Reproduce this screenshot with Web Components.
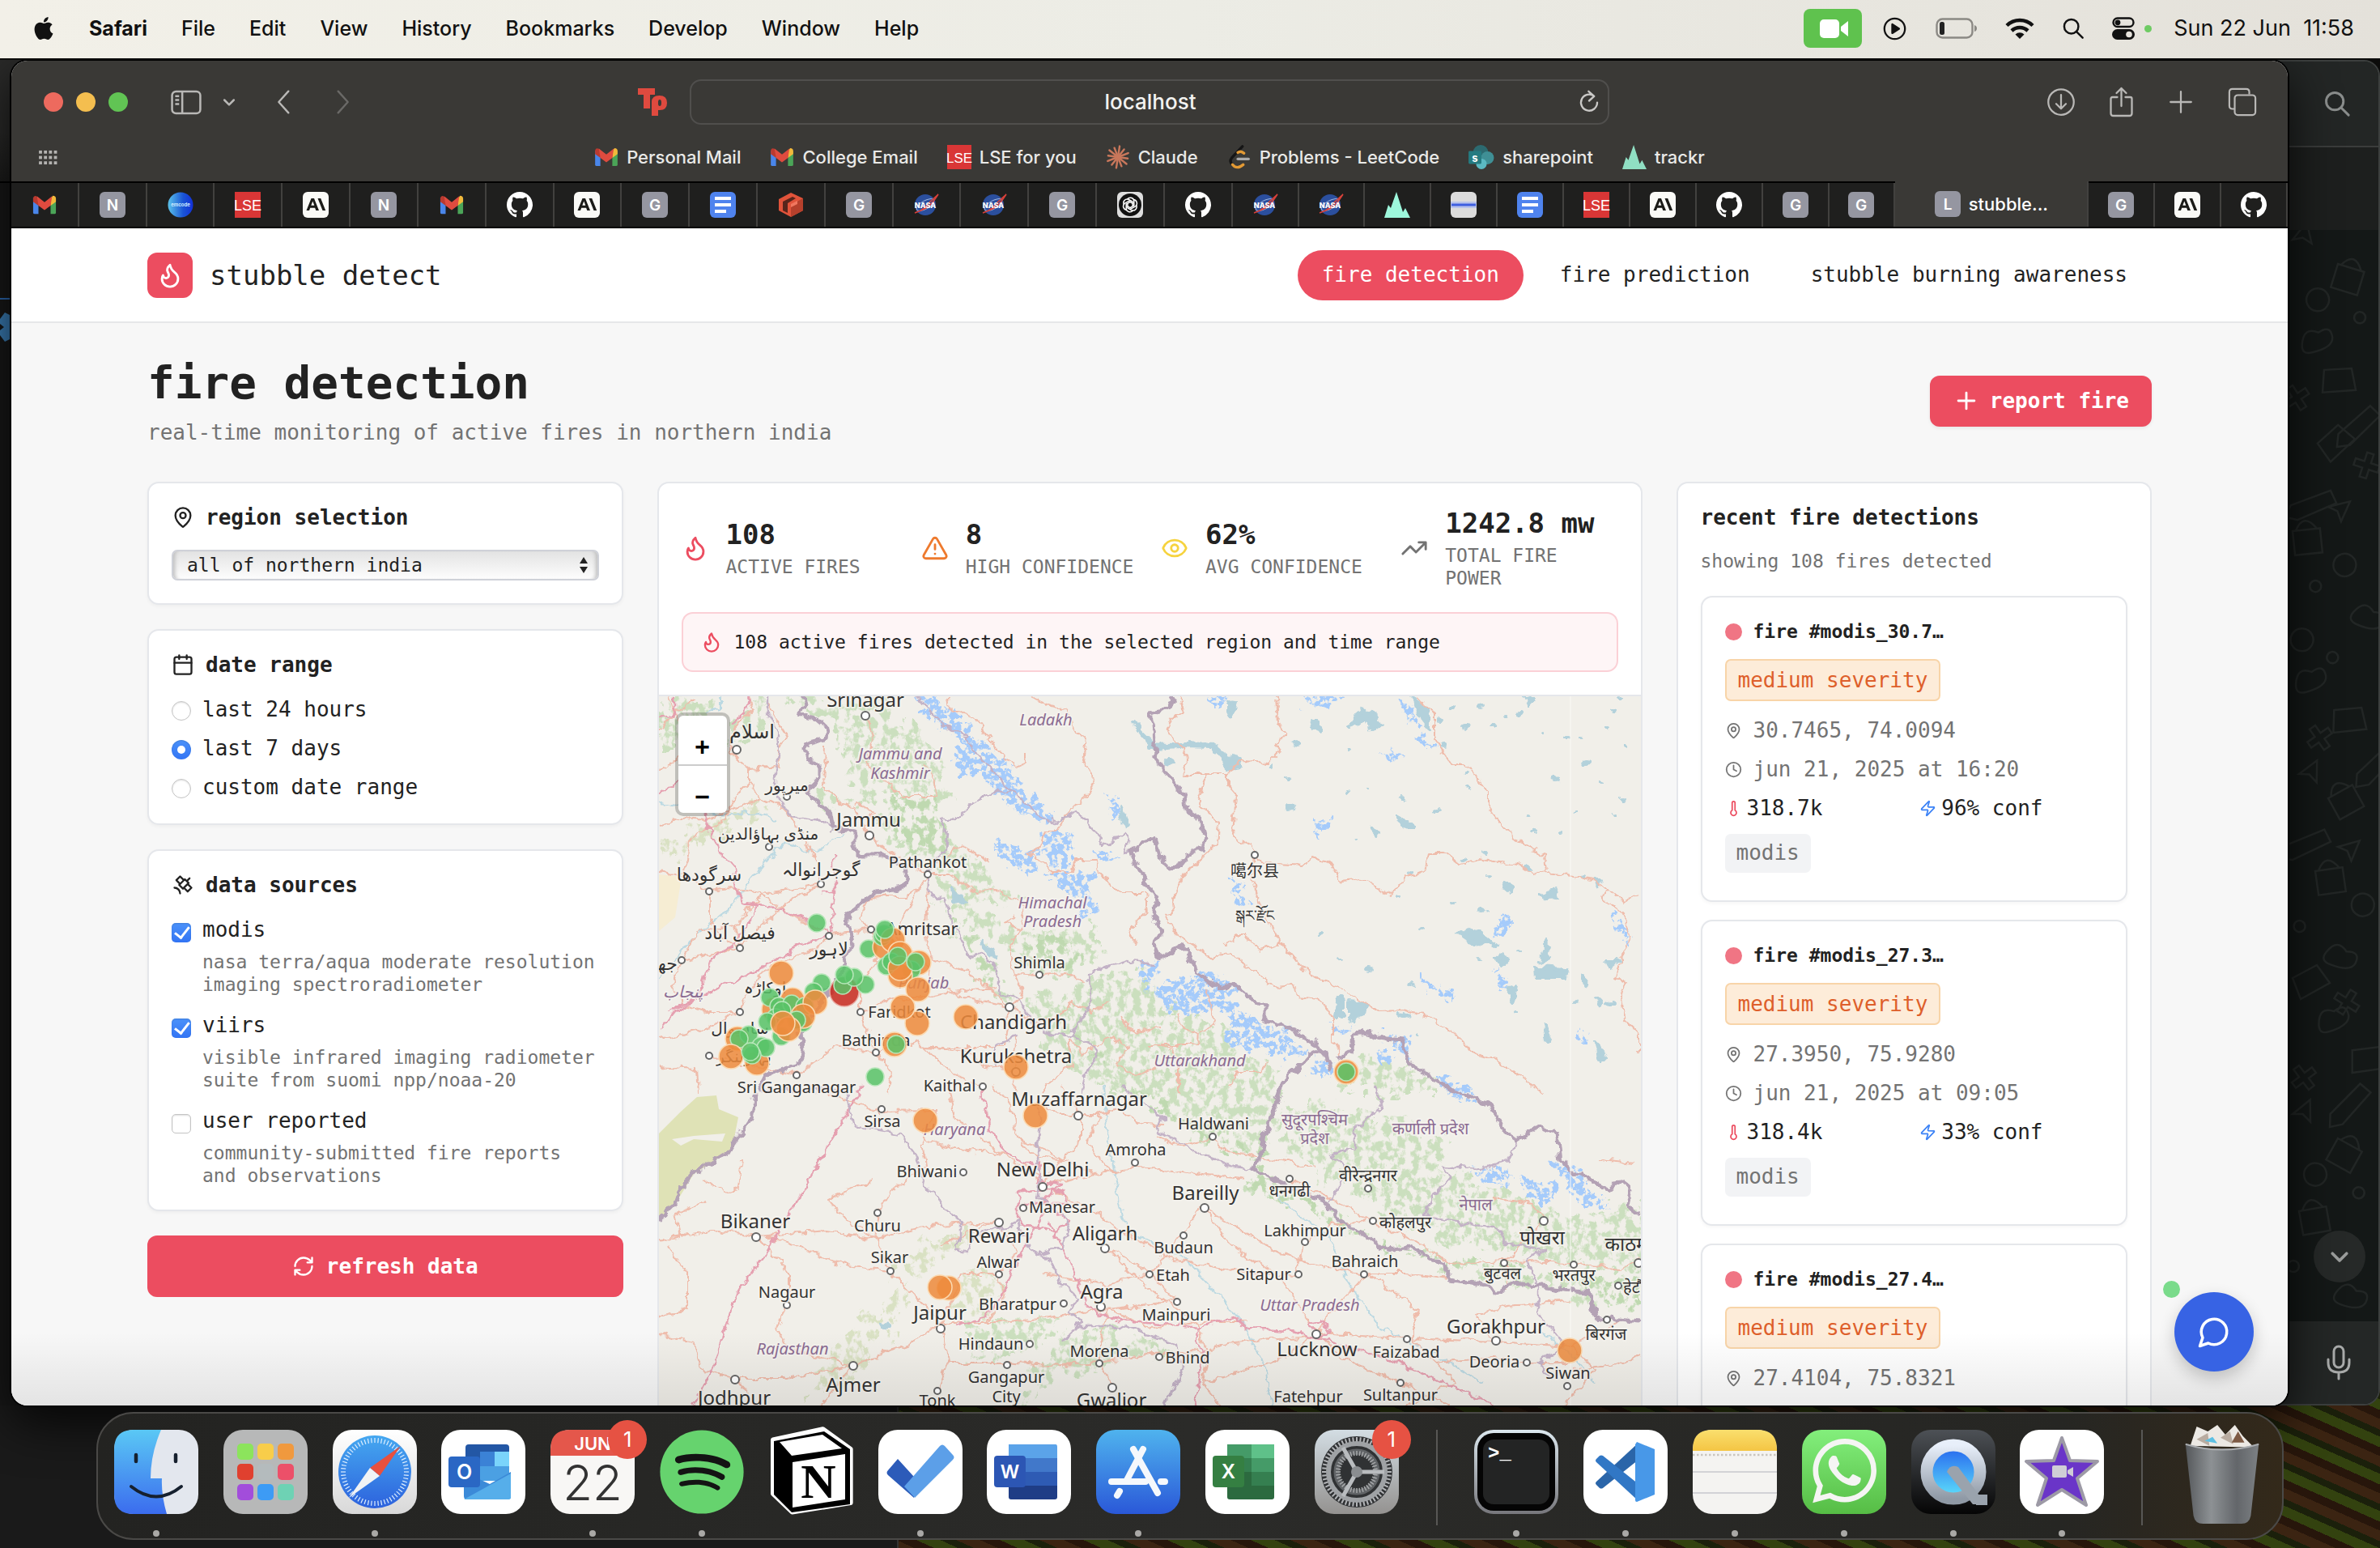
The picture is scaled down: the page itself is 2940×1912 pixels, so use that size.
<!DOCTYPE html>
<html lang="en">
<head>
<meta charset="utf-8">
<title>stubble detect</title>
<style>
html,body{margin:0;height:100%;overflow:hidden;background:#111}
</style>
</head>
<body>
<mac-desktop></mac-desktop>
<script>
const MONO='"DejaVu Sans Mono","Liberation Mono",monospace';
const UI='Inter,"Liberation Sans",sans-serif';
const BASE='*{box-sizing:border-box}button{font:inherit;color:inherit;background:none;border:0;padding:0;margin:0}a{color:inherit;text-decoration:none}svg{display:block}h1,h2,h3,p{margin:0}';
const define=(tag,css,html)=>customElements.define(tag,class extends HTMLElement{
  connectedCallback(){
    if(this.shadowRoot)return;
    const root=this.attachShadow({mode:'open'});
    root.innerHTML='<style>'+BASE+css+'</style>'+(typeof html==='function'?html(this):html);
  }
});

/* ---------- icons ---------- */
const line=(d,w=2)=>`<svg viewBox="0 0 24 24" fill="none" stroke="currentColor" stroke-width="${w}" stroke-linecap="round" stroke-linejoin="round">${d}</svg>`;
const tile=(bg,body)=>`<svg viewBox="0 0 32 32"><rect width="32" height="32" rx="6" fill="${bg}"/>${body}</svg>`;
const letter=(l)=>tile('#9596a1',`<text x="16" y="23" text-anchor="middle" font-family="Inter,sans-serif" font-weight="600" font-size="19" fill="#fff">${l}</text>`);
const app=(bg,body,defs='')=>`<svg viewBox="0 0 104 104"><defs>${defs}</defs><rect width="104" height="104" rx="24" fill="${bg}"/>${body}</svg>`;
const grad=(id,...c)=>`<linearGradient id="${id}" x1="0" y1="0" x2="0" y2="1">${c.map((k,i)=>`<stop offset="${i/(c.length-1)}" stop-color="${k}"/>`).join('')}</linearGradient>`;
const ticks=(n,cx,cy,r1,r2,col,w)=>Array.from({length:n},(_,i)=>{const a=i/n*Math.PI*2,c=Math.cos(a),s=Math.sin(a);return `<path d="M${(cx+c*r1).toFixed(1)} ${(cy+s*r1).toFixed(1)}L${(cx+c*r2).toFixed(1)} ${(cy+s*r2).toFixed(1)}" stroke="${col}" stroke-width="${w}"/>`}).join('');
const ICONS={
flame:line('<path d="M8.5 14.5A2.5 2.5 0 0 0 11 12c0-1.38-.5-2-1-3-1.072-2.143-.224-4.054 2-6 .5 2.5 2 4.9 4 6.5 2 1.6 3 3.5 3 5.5a7 7 0 1 1-14 0c0-1.153.433-2.294 1-3a2.5 2.5 0 0 0 2.5 2.5z"/>'),
pin:line('<path d="M20 10c0 4.993-5.539 10.193-7.399 11.799a1 1 0 0 1-1.202 0C9.539 20.193 4 14.993 4 10a8 8 0 0 1 16 0"/><circle cx="12" cy="10" r="3"/>'),
calendar:line('<path d="M8 2v4M16 2v4M3 10h18"/><rect x="3" y="4" width="18" height="18" rx="2"/>'),
satellite:line('<path d="M13 7 9 3 5 7l4 4M17 11l4 4-4 4-4-4M8 12l4 4 6-6-4-4ZM16 8l3-3M9 21a6 6 0 0 0-6-6"/>'),
refresh:line('<path d="M3 12a9 9 0 0 1 9-9 9.75 9.75 0 0 1 6.74 2.74L21 8M21 3v5h-5M21 12a9 9 0 0 1-9 9 9.75 9.75 0 0 1-6.74-2.74L3 16M8 16H3v5"/>'),
alert:line('<path d="m21.73 18-8-14a2 2 0 0 0-3.48 0l-8 14A2 2 0 0 0 4 21h16a2 2 0 0 0 1.73-3M12 9v4M12 17h.01"/>'),
eye:line('<path d="M2.062 12.348a1 1 0 0 1 0-.696 10.75 10.75 0 0 1 19.876 0 1 1 0 0 1 0 .696 10.75 10.75 0 0 1-19.876 0"/><circle cx="12" cy="12" r="3"/>'),
trend:line('<path d="M22 7l-8.5 8.500-5-5L2 17M16 7h6v6"/>'),
clock:line('<circle cx="12" cy="12" r="10"/><path d="M12 6v6l4 2"/>'),
thermo:line('<path d="M14 4v10.54a4 4 0 1 1-4 0V4a2 2 0 0 1 4 0Z"/>'),
zap:line('<path d="M4 14a1 1 0 0 1-.78-1.63l9.9-10.2a.5.5 0 0 1 .86.46l-1.92 6.02A1 1 0 0 0 13 10h7a1 1 0 0 1 .78 1.63l-9.9 10.2a.5.5 0 0 1-.86-.46l1.920-6.02A1 1 0 0 0 11 14z"/>'),
message:line('<path d="M7.9 20A9 9 0 1 0 4 16.1L2 22Z"/>'),
plus:line('<path d="M5 12h14M12 5v14"/>'),
thinplus:line('<path d="M3 12h18M12 3v18"/>',1.6),
chevdown:line('<path d="M5 9l7 7 7-7"/>',3),
back:line('<path d="M16 2 7 12l9 10"/>',1.8),
forward:line('<path d="M8 2l9 10-9 10"/>',1.8),
sidebar:`<svg viewBox="0 0 40 32" fill="none" stroke="currentColor" stroke-width="2.600"><rect x="2" y="2" width="36" height="28" rx="5"/><path d="M15 2v28M6 8h5M6 13h5M6 18h5"/></svg>`,
reload:line('<path d="M20 12.500a8 8 0 1 1-3-6.200M11.500 1.500l5.500 4.800-5 4.500"/>',1.9),
download:line('<circle cx="12" cy="12" r="10.500"/><path d="M12 6v11M8 13.500l4 4 4-4"/>',1.5),
share:`<svg viewBox="0 0 30 38" fill="none" stroke="currentColor" stroke-width="2.300" stroke-linejoin="round" stroke-linecap="round"><path d="M10 13H4q-2 0-2 2v18q0 3 3 3h20q3 0 3-3V15q0-2-2-2h-6M15 24V2M9 8l6-6 6 6"/></svg>`,
tabs:`<svg viewBox="0 0 38 38" fill="none" stroke="currentColor" stroke-width="2.300"><path d="M9 28H6q-4 0-4-4V6q0-4 4-4h18q4 0 4 4v3"/><rect x="9" y="10" width="27" height="26" rx="4"/></svg>`,
mag:line('<circle cx="10" cy="10" r="7.500"/><path d="M15.500 15.500 22 22"/>',2.100),
grid:`<svg viewBox="0 0 26 20" fill="currentColor">${[0,1,2,3].map(x=>[0,1,2].map(y=>`<rect x="${1+x*6.500}" y="${1+y*7}" width="4" height="4"/>`).join('')).join('')}</svg>`,
apple:`<svg viewBox="0 0 24 24" fill="currentColor"><path d="M12.152 6.896c-.948 0-2.415-1.078-3.96-1.04-2.04.027-3.91 1.183-4.961 3.014-2.117 3.675-.546 9.103 1.519 12.09 1.013 1.454 2.208 3.09 3.792 3.039 1.52-.065 2.09-.987 3.935-.987 1.831 0 2.35.987 3.96.948 1.637-.026 2.676-1.48 3.676-2.948 1.156-1.688 1.636-3.325 1.662-3.415-.039-.013-3.182-1.221-3.22-4.857-.026-3.04 2.48-4.494 2.597-4.559-1.429-2.09-3.623-2.324-4.39-2.376-2-.156-3.675 1.09-4.61 1.09zM15.53 3.83c.843-1.012 1.4-2.427 1.245-3.83-1.207.052-2.662.805-3.532 1.818-.78.896-1.454 2.338-1.273 3.714 1.338.104 2.715-.688 3.559-1.701"/></svg>`,
facetime:`<svg viewBox="0 0 72 48"><rect width="72" height="48" rx="8" fill="#5fc24e"/><rect x="20" y="13" width="24" height="23" rx="5" fill="#fff"/><path d="M46 22l9-7v19l-9-7z" fill="#fff"/></svg>`,
play:line('<circle cx="12" cy="12" r="10.500"/><path d="M9.500 7.500v9l7-4.500z" fill="currentColor"/>',1.900),
battery:`<svg viewBox="0 0 52 26" fill="none"><rect x="1.500" y="1.500" width="44" height="23" rx="7" stroke="#8b8984" stroke-width="2.400"/><rect x="5" y="5" width="6" height="16" rx="2.500" fill="#222"/><path d="M48 9v8q3-1 3-4t-3-4" fill="#8b8984"/></svg>`,
wifi:`<svg viewBox="0 0 36 28" fill="none" stroke="currentColor" stroke-width="4.500"><path d="M2 10.500a23 23 0 0 1 32 0M8 17a14.500 14.500 0 0 1 20 0"/><path d="M12.500 21.500a8 8 0 0 1 11 0L18 27z" fill="currentColor" stroke="none"/></svg>`,
control:`<svg viewBox="0 0 28 28" fill="none"><rect x="1.500" y="1.500" width="25" height="10.500" rx="5.200" stroke="currentColor" stroke-width="2.400"/><circle cx="7" cy="6.800" r="3.400" fill="currentColor"/><rect y="15" width="28" height="13" rx="6.500" fill="currentColor"/><circle cx="21" cy="21.500" r="3.800" fill="#e6e3dc"/></svg>`,
tp:`<svg viewBox="0 0 36 34" fill="#df4a3f"><path d="M0 0h21v8h-6v17H7V8H0z"/><path d="M17 34V17q0-8 9.500-8T36 18t-9 9h-2v7zM25 19q0 3 2 3t2-4-2-4-2 3z" fill-rule="evenodd"/></svg>`,
gmail:`<svg viewBox="0 0 32 26"><path d="M1 4v19q0 2 2 2h5V12z" fill="#4a86ea"/><path d="M31 4v19q0 2-2 2h-5V12z" fill="#4ba558"/><path d="M24 5v9l7-5V5q0-4-4-4z" fill="#f2b93b"/><path d="M8 5v9L1 9V4q1-4 5-2z" fill="#b93a30"/><path d="M6 1.500 16 9.500 26 1.500l-2 12.500-8 6-8-6z" fill="#df4b3f"/></svg>`,
lse:`<svg viewBox="0 0 32 32"><rect width="32" height="32" fill="#d93636"/><text x="16" y="23" text-anchor="middle" font-family="Liberation Sans Narrow,Liberation Sans,sans-serif" font-size="18" fill="#fff">LSE</text></svg>`,
claude:`<svg viewBox="0 0 32 32" stroke="#c9775b" stroke-width="2.600" stroke-linecap="round">${Array.from({length:12},(_,i)=>{const a=i*Math.PI/6+.15,r=i%2?14.500:13;return `<path d="M16 16L${(16+Math.cos(a)*r).toFixed(1)} ${(16+Math.sin(a)*r).toFixed(1)}"/>`}).join('')}</svg>`,
leetcode:`<svg viewBox="0 0 30 32" fill="none" stroke-width="3.600" stroke-linecap="round"><path d="M19 2 5 17q-4 5 1 9" stroke="#151515"/><path d="M21 11q-4-4-8-1M6 26q6 7 14 0" stroke="#e39a34"/><path d="M13 18.500h14" stroke="#aaa"/></svg>`,
sharepoint:`<svg viewBox="0 0 34 32"><circle cx="16" cy="10" r="10" fill="#2c6a70"/><circle cx="25" cy="17" r="8.500" fill="#3f8f95"/><circle cx="17" cy="25" r="7" fill="#5bb9c2"/><rect y="8" width="17" height="17" rx="1.500" fill="#257b81"/><text x="8.500" y="22" text-anchor="middle" font-family="Inter,sans-serif" font-weight="700" font-size="14" fill="#fff">s</text></svg>`,
trackr:`<svg viewBox="0 0 32 32"><path d="M0 32 5 16l3 4 7-20 8 25 3-5 6 12z" fill="#90dfc3"/></svg>`,
trackr2:`<svg viewBox="0 0 32 32"><path d="M0 32 5 16l3 4 7-20 8 25 3-5 6 12z" fill="#9df7dc"/></svg>`,
N:letter('N'),G:letter('G'),L:letter('L'),
emcode:`<svg viewBox="0 0 32 32"><defs><linearGradient id="e"><stop offset="0" stop-color="#5cc3ea"/><stop offset=".6" stop-color="#1a55d6"/><stop offset="1" stop-color="#1230d8"/></linearGradient></defs><circle cx="16" cy="16" r="15.500" fill="url(#e)"/><text x="16" y="18" text-anchor="middle" font-family="Inter,sans-serif" font-weight="700" font-size="6" fill="#cdeaff">emcode</text></svg>`,
ai:tile('#fafaf7',`<path d="M4.500 23 10.500 8h3.500l6 15h-3.700l-1.200-3.200H9.200L8 23zm5.800-6.200h4L12.300 11.500zM18.500 8h3.700l6 15h-3.700z" fill="#1b1b18"/>`),
github:`<svg viewBox="0 0 16 16" fill="#fff"><path d="M8 0C3.58 0 0 3.58 0 8c0 3.54 2.29 6.53 5.47 7.59.4.07.55-.17.55-.38 0-.19-.01-.82-.01-1.49-2.01.37-2.53-.49-2.69-.94-.09-.23-.48-.94-.82-1.13-.28-.15-.68-.52-.01-.53.63-.01 1.08.58 1.23.82.72 1.21 1.87.87 2.33.66.07-.52.28-.87.51-1.07-1.78-.2-3.64-.89-3.64-3.95 0-.87.31-1.59.82-2.15-.08-.2-.36-1.02.08-2.12 0 0 .67-.21 2.2.82.64-.18 1.32-.27 2-.27s1.36.09 2 .27c1.53-1.04 2.2-.82 2.2-.82.44 1.1.16 1.92.08 2.12.51.56.82 1.27.82 2.15 0 3.07-1.87 3.75-3.65 3.95.29.25.54.73.54 1.48 0 1.07-.01 1.93-.01 2.2 0 .21.15.46.55.38A8.01 8.01 0 0 0 16 8c0-4.42-3.58-8-8-8z"/></svg>`,
doc:tile('#4f83ee','<path d="M6 6h20v4H6zM6 14h20v4H6zM6 22h14v4H6z" fill="#fff"/>'),
brick:`<svg viewBox="0 0 32 32"><path d="M16 1 31 8v15l-15 8L1 23V9z" fill="#e0533a"/><path d="M16 16l15-8v15l-15 8z" fill="#b5402c"/><path d="M6 12l12-6 4 2-10 6v12l-6-3z" fill="#2a1512" opacity=".75"/><path d="M16 15l8-4v4l-8 4z" fill="#f0775f"/></svg>`,
nasa:`<svg viewBox="0 0 32 32"><circle cx="15" cy="16" r="13" fill="#2b4f9e"/><ellipse cx="15" cy="16" rx="12" ry="5" transform="rotate(-30 15 16)" fill="none" stroke="#9db2dd" stroke-width="1"/><path d="M2 26Q14 22 19 14L31 3q-9 14-15 17T2 26" fill="none" stroke="#d8413a" stroke-width="1.500"/><text x="15" y="20" text-anchor="middle" font-family="Inter,sans-serif" font-weight="800" font-size="9" fill="#fff">NASA</text></svg>`,
gpt:`<svg viewBox="0 0 32 32"><rect width="32" height="32" rx="6" fill="#dedede"/><circle cx="16" cy="16" r="14" fill="#111"/><g fill="none" stroke="#fff" stroke-width="1.500" stroke-linejoin="round">${[0,60,120,180,240,300].map(a=>`<path d="M12.500 9.200a4.600 4.600 0 0 1 8.300 1.600v6l-5 2.900" transform="rotate(${a} 16 16)"/>`).join('')}</g></svg>`,
banner:tile('#dcdcdc','<rect y="12" width="32" height="8" fill="#b9c3ea"/><rect x="1" y="14.500" width="30" height="3" fill="#3f5fe0"/>'),
/* dock applications */
finder:app('#e3e7ee','<path d="M24 0h34q-13 30-13 60h14q-1 20 6 44H24Q0 104 0 80V24Q0 0 24 0z" fill="url(#f)"/><path d="M27 31v8M76 31v8" stroke="#16202e" stroke-width="4.500" stroke-linecap="round"/><path d="M21 70q31 25 62 0" fill="none" stroke="#16202e" stroke-width="4" stroke-linecap="round"/>',grad('f','#5ac8f5','#3b6cee')),
launchpad:app('#b7b8b8',[['#8ce45c','#f8cd4a','#f0993e'],['#e0402f','#b4bbbd','#ec5069'],['#a24ddb','#3d9bf5','#6ed2b4']].map((r,y)=>r.map((c,x)=>`<rect x="${17+x*25}" y="${17+y*25}" width="20" height="20" rx="5" fill="${c}"/>`).join('')).join('')),
safari:app('url(#w)',`<circle cx="52" cy="52" r="45" fill="url(#s)"/>${ticks(60,52,52,36,42,'#dfefff',1.200)}<path d="M84 20 46 47l12 10z" fill="#e8503f"/><path d="M20 84l26-37 12 10z" fill="#f1f3f5"/>`,grad('w','#fff','#d8d8d8')+grad('s','#45a8f0','#2d62dd')),
outlook:app('#fff','<rect x="30" y="18" width="54" height="36" rx="4" fill="#2357a5"/><path d="M48 27h18v18H48z" fill="#3b82d6"/><path d="M66 27h18v18H66z" fill="#7ad4fb"/><path d="M48 45h36v18H48z" fill="#4ba0e3"/><path d="M28 52l32 15 26-15v30q0 4-4 4H32q-4 0-4-4z" fill="#3b8ad8"/><path d="M28 86 86 54v30q0 2-4 2z" fill="#56aeea"/><rect x="9" y="33" width="39" height="38" rx="4" fill="#2a67c4"/><text x="28.500" y="61" text-anchor="middle" font-family="Inter,sans-serif" font-weight="600" font-size="25" fill="#fff">O</text>'),
calendarapp:app('#f8f7f5','<path d="M24 0h56q24 0 24 24v8H0v-8Q0 0 24 0z" fill="#e4574b"/><text x="52" y="25" text-anchor="middle" font-family="Inter,sans-serif" font-weight="600" font-size="22" fill="#fff">JUN</text><text x="52" y="87" text-anchor="middle" font-family="Inter,sans-serif" font-weight="300" font-size="60" fill="#333">22</text>'),
spotify:`<svg viewBox="-1 -1 26 26"><circle cx="12" cy="12" r="12.900" fill="#66d36e"/><circle cx="12" cy="12" r="10" fill="#141414"/><path fill="#66d36e" d="M12 -.5C5.4-.5-.5 5.400-.5 12S5.400 24.500 12 24.500 24.500 18.600 24.500 12 18.660-.5 12-.5zm5.521 17.840c-.24.359-.66.48-1.021.24-2.82-1.74-6.36-2.101-10.561-1.141-.418.122-.779-.179-.899-.539-.12-.421.18-.78.54-.9 4.56-1.021 8.52-.6 11.64 1.32.42.18.479.659.301 1.02zm1.44-3.3c-.301.42-.841.6-1.262.3-3.239-1.98-8.159-2.58-11.939-1.38-.479.12-1.02-.12-1.14-.6-.12-.48.12-1.021.6-1.141C9.600 9.900 15 10.561 18.720 12.840c.361.181.54.78.241 1.2zm.12-3.36C15.240 8.400 8.820 8.160 5.160 9.301c-.6.179-1.2-.181-1.38-.721-.18-.601.18-1.2.72-1.381 4.260-1.260 11.280-1.020 15.721 1.621.539.3.719 1.020.419 1.560-.299.421-1.020.599-1.559.3z"/></svg>`,
notion:`<svg viewBox="0 0 104 104"><path d="M3 12 68-2l36 26v70l-76 12L3 82z" fill="#fff" stroke="#fff" stroke-width="6" stroke-linejoin="round" transform="translate(2 1) scale(.95)"/><path d="M6 14 68 2l32 22v68l-72 10L6 80z" fill="#000"/><path d="M13 15 66 6l24 17-62 9z" fill="#fff"/><path d="M29 40 94 30v56L29 96z" fill="#fff"/><text x="61" y="84" text-anchor="middle" font-family="Liberation Serif,serif" font-weight="700" font-size="60" fill="#000">N</text></svg>`,
todo:app('#fff','<path d="M24 36 44 58 44 84 12 56q-3-3 0-6z" fill="#2c5bb9"/><path d="M45 84 32 70 76 20q3-3 6 0l10 11q3 3 0 6z" fill="#5c9fe8"/>'),
word:app('#fff','<path d="M27 18h58q2 0 2 3v14H27z" fill="#5ba3e9"/><path d="M27 35h60v17H27z" fill="#4178ca"/><path d="M27 52h60v17H27z" fill="#2e5bb4"/><path d="M27 69h60v14q0 3-3 3H30q-3 0-3-3z" fill="#1f3d86"/><rect x="9" y="32" width="39" height="39" rx="4" fill="#2c56b4"/><text x="28.500" y="60" text-anchor="middle" font-family="Inter,sans-serif" font-weight="600" font-size="23" fill="#fff">W</text>'),
appstore:app('url(#a)','<g stroke="#f5f8fc" stroke-width="8" stroke-linecap="round"><path d="M46 24 76 78M58 24 38 62M19 64h42M80 64h5M29 76l-3 5"/></g>',grad('a','#4fb3ee','#2a58d8')),
excel:app('#fff','<rect x="27" y="18" width="58" height="68" rx="3" fill="#2c6a3f"/><path d="M27 18h30v17H27z" fill="#459b68"/><path d="M57 18h28v17H57z" fill="#5fc189"/><path d="M27 35h30v17H27z" fill="#357f50"/><path d="M57 35h28v17H57z" fill="#459b68"/><path d="M57 52h28v17H57z" fill="#357f50"/><rect x="9" y="32" width="39" height="39" rx="4" fill="#357f42"/><text x="28.500" y="60" text-anchor="middle" font-family="Inter,sans-serif" font-weight="600" font-size="24" fill="#fff">X</text>'),
settings:app('url(#g)',`<circle cx="52" cy="52" r="44" fill="#303234"/>${ticks(56,52,52,36,43,'#b3b5b8',2)}<circle cx="52" cy="52" r="35" fill="none" stroke="#9fa2a5" stroke-width="6"/><circle cx="52" cy="52" r="25" fill="none" stroke="#606366" stroke-width="7"/>${ticks(40,52,52,20,26,'#a6a8aa',1.500)}<path d="M52 52h34M52 52 35 22M52 52 35 82" stroke="#b9bcbf" stroke-width="5"/><circle cx="52" cy="52" r="7" fill="#8a8d90"/>`,grad('g','#d3dde3','#949290')),
terminal:app('url(#t)','<rect x="4" y="4" width="96" height="96" rx="20" fill="#050505"/><rect x="11" y="12" width="82" height="80" rx="13" fill="#232424"/><text x="17" y="36" font-family="Liberation Mono,monospace" font-weight="700" font-size="24" fill="#fff">&gt;_</text>',grad('t','#dbe7ee','#77777c')),
vscode:app('#fff','<path d="M68 16 16 64q-2 2 0 4l4 4q2 1 4 0L68 37z" fill="#2a65a9"/><path d="M68 88 16 40q-2-2 0-4l4-4q2-1 4 0L68 67z" fill="#3177c5"/><path d="M66 15l22 9v56l-22 9q-2 0-2-2V18z" fill="#4898e8"/>'),
notes:app('#f4f3f1','<path d="M24 0h56q24 0 24 24v2H0v-2Q0 0 24 0z" fill="url(#n)"/><path d="M0 31h104" stroke="#c9c6c0" stroke-width="2.500" stroke-dasharray="2.500 2.500"/><path d="M0 52h104M0 78h104" stroke="#d2d2d6" stroke-width="2"/>',grad('n','#fadf6e','#f4c544')),
whatsapp:app('url(#h)','<path transform="translate(13 11) scale(3.300)" fill="#f5f5f3" d="M17.472 14.382c-.297-.149-1.758-.867-2.03-.967-.273-.099-.471-.148-.67.15-.197.297-.767.966-.94 1.164-.173.199-.347.223-.644.075-.297-.15-1.255-.463-2.39-1.475-.883-.788-1.48-1.761-1.653-2.059-.173-.297-.018-.458.13-.606.134-.133.298-.347.446-.52.149-.174.198-.298.298-.497.099-.198.05-.371-.025-.52-.075-.149-.669-1.612-.916-2.207-.242-.579-.487-.5-.669-.51-.173-.008-.371-.01-.57-.01-.198 0-.52.074-.792.372-.272.297-1.04 1.016-1.04 2.479 0 1.462 1.065 2.875 1.213 3.074.149.198 2.096 3.2 5.077 4.487.709.306 1.262.489 1.694.625.712.227 1.36.195 1.871.118.571-.085 1.758-.719 2.006-1.413.248-.694.248-1.289.173-1.413-.074-.124-.272-.198-.57-.347m-5.421 7.403h-.004a9.87 9.87 0 01-5.031-1.378l-.361-.214-3.741.982.998-3.648-.235-.374a9.86 9.86 0 01-1.51-5.26c.001-5.45 4.436-9.884 9.888-9.884 2.64 0 5.122 1.03 6.988 2.898a9.825 9.825 0 012.893 6.994c-.003 5.45-4.437 9.884-9.885 9.884m8.413-18.297A11.815 11.815 0 0012.05 0C5.495 0 .16 5.335.157 11.892c0 2.096.547 4.142 1.588 5.945L.057 24l6.305-1.654a11.882 11.882 0 005.683 1.448h.005c6.554 0 11.89-5.335 11.893-11.893a11.821 11.821 0 00-3.48-8.413Z"/>',grad('h','#83ef7c','#56bd45')),
quicktime:app('url(#q)','<circle cx="52" cy="52" r="33" fill="url(#r)" stroke="url(#p)" stroke-width="15"/><path d="M44 52q4-10 14-6l34 46H76z" fill="#9aa3ad"/><path d="M80 80h14v13H80z" fill="#9aa3ad"/>',grad('q','#4d5156','#050505')+grad('r','#2563ee','#5fe3fb')+grad('p','#e8effa','#8f99a5')),
imovie:app('#fff','<path d="M52 10 62 38l34 1-25 21 11 33-30-19-30 19 11-33L8 39l34-1z" fill="#6a35c8" stroke="#9d9aa6" stroke-width="4" stroke-linejoin="round"/><rect x="40" y="44" width="18" height="15" rx="2" fill="#cfcdd6"/><path d="M59 50l7-4v12l-7-4z" fill="#cfcdd6"/>'),
trash:`<svg viewBox="0 0 104 120"><defs><linearGradient id="k"><stop offset="0" stop-color="#55585b"/><stop offset=".35" stop-color="#8d9194"/><stop offset=".7" stop-color="#63666a"/><stop offset="1" stop-color="#7d8184"/></linearGradient></defs><path d="M12 20l8-24 14 6 12-8 10 12 12-12 10 14 14 14z" fill="#ece9e4"/><path d="M20 12l14-8 2 16zM50 10l12-8 4 16z" fill="#b9aca0"/><path d="M30 14l10-5 6 8z" fill="#5cc0e4"/><path d="M64 16l8-14 8 14z" fill="#7d5a44"/><path d="M6 18q46 12 92 0L88 108q-2 10-12 10H28q-10 0-12-10z" fill="url(#k)"/><path d="M6 18q46 14 92 0" fill="none" stroke="#a9acaf" stroke-width="2"/></svg>`
};
define('ui-icon',':host{display:block;flex:none}svg{width:100%;height:100%;overflow:visible}',e=>ICONS[e.getAttribute('name')]);
const ic=(n,w,h=w,c='')=>`<ui-icon name="${n}" style="width:${w}px;height:${h}px${c?';color:'+c:''}"></ui-icon>`;

/* ---------- menu bar ---------- */
define('menu-bar',`:host{display:flex;align-items:center;justify-content:space-between;height:72px;padding:0 32px 2px 40px;background:linear-gradient(90deg,#f2f0e8,#ecece5 50%,#e4e1da);font:500 25px/32px ${UI};color:#111}
nav,div{display:flex;align-items:center}nav{gap:42px}nav b{font-weight:700}.dot{width:9px;height:9px;border-radius:50%;background:#6ecb63;margin:0 27px 0 12px}button{white-space:pre}.date{font-size:27px;font-weight:400}`,
`<nav>${ic('apple',28,32)}<button><b>Safari</b></button>${['File','Edit','View','History','Bookmarks','Develop','Window','Help'].map(t=>`<button>${t}</button>`).join('')}</nav>
<div>${ic('facetime',72,48)}<div style="gap:34px;margin-left:26px">${ic('play',29)}<div style="margin-left:2px">${ic('battery',52,26)}</div>${ic('wifi',36,28)}${ic('mag',28)}${ic('control',28)}</div><span class="dot"></span><button class="date">Sun 22 Jun  11:58</button></div>`);

/* ---------- browser chrome ---------- */
const MARKS=[['gmail','Personal Mail'],['gmail','College Email'],['lse','LSE for you'],['claude','Claude'],['leetcode','Problems - LeetCode'],['sharepoint','sharepoint'],['trackr','trackr']];
const TABS='gmail N emcode lse ai N gmail github ai G doc brick G nasa nasa G gpt github nasa nasa trackr2 banner doc lse ai github G G * G ai github'.split(' ');
define('browser-chrome',`:host{display:block;background:#3a3936;font:500 24px/30px ${UI};color:#e9e9e7}
.bar{display:grid;grid-template-columns:838px 1fr 838px;height:104px;align-items:center;padding-bottom:2px}
.l,.rr{display:flex;align-items:center;color:#b9b8b6}.l{padding-left:40px}.l i{width:24px;height:24px;border-radius:50%;margin-right:16px}
.rr{justify-content:flex-end;padding-right:38px;gap:41px}
.tp{margin-left:auto;padding-right:28px}
form{display:flex;align-items:center;height:56px;border:2px solid #504f4d;border-radius:14px;padding:0 8px 0 12px;color:#c9c8c6}
input{flex:1;min-width:0;background:none;border:0;outline:0;text-align:center;font:500 26px/32px ${UI};color:#f2f2f0;padding:0 0 0 28px}
.marks{display:grid;grid-template-columns:84px 1fr 84px;align-items:center;height:51px;margin-top:-6px;padding-bottom:9px}
.marks>nav{display:flex;justify-content:center;gap:36px}.marks a{display:flex;align-items:center;gap:10px;font-size:22px}
.tabs{display:flex;height:58px;background:#1f1f1e;border-top:2px solid #000;border-bottom:2px solid #000}
.tabs button{flex:41 1 0;display:flex;align-items:center;justify-content:center;gap:10px;border-right:2px solid #42413f;min-width:0}
.tabs .wide{flex-grow:42}
.tabs .on{flex:0 0 239px;background:#3a3936;margin-top:-2px;font-size:22px;color:#fff}`,
`<div class="bar"><div class="l"><i style="background:#ed6a5e"></i><i style="background:#f4be4f"></i><i style="background:#61c454"></i><button aria-label="Sidebar" style="margin-left:36px">${ic('sidebar',40,31)}</button><button aria-label="Tab groups" style="margin-left:23px">${ic('chevdown',20)}</button><button aria-label="Back" style="margin-left:42px">${ic('back',32)}</button><button aria-label="Forward" style="margin-left:40px;color:#6a6967">${ic('forward',32)}</button><span class="tp">${ic('tp',36,34)}</span></div>
<form><input aria-label="Address" value="localhost"><button type="button" aria-label="Reload">${ic('reload',30)}</button></form>
<div class="rr"><button aria-label="Downloads">${ic('download',36)}</button><button aria-label="Share">${ic('share',31,38)}</button><button aria-label="New tab">${ic('thinplus',34)}</button><button aria-label="Tab overview">${ic('tabs',36)}</button></div></div>
<div class="marks"><div style="padding-left:33px;color:#b4b3b1">${ic('grid',25,19)}</div><nav>${MARKS.map(([i,t])=>`<a href="#">${ic(i,i==='sharepoint'?32:30,i==='gmail'?24:30)}<span>${t}</span></a>`).join('')}</nav></div>
<div class="tabs">${TABS.map((t,i)=>t==='*'?`<button class="on">${ic('L',32)}<span>stubble...</span></button>`:`<button class="${i<18?'wide':''}" aria-label="${t}">${ic(t,t==='gmail'?30:32,t==='gmail'?26:32)}</button>`).join('')}</div>`);

/* ---------- site ---------- */
define('site-header',`:host{display:flex;align-items:center;justify-content:space-between;height:117px;padding:0 168px;background:#fff;border-bottom:2px solid #e6e7e9;font:26px/34px ${MONO};color:#222}
.brand{display:flex;align-items:center;gap:21px;font-size:34px;line-height:42px}.logo{width:56px;height:56px;border-radius:12px;background:#ec4d60;color:#fff;display:grid;place-items:center}
nav{display:flex;gap:15px}nav a{padding:13px 30px 15px;border-radius:31px}nav .on{background:#ec4d60;color:#fff}`,
`<a class="brand" href="#"><span class="logo">${ic('flame',34)}</span><span>stubble detect</span></a><nav><a class="on" href="#">fire detection</a><a href="#">fire prediction</a><a href="#">stubble burning awareness</a></nav>`);

define('page-title',`:host{display:flex;justify-content:space-between;align-items:center;font:26px/34px ${MONO};color:#222;height:196px;padding:24px 0 28px}
h1{font-size:56px;line-height:68px}p{color:#737373;margin-top:10px}
button{display:flex;align-items:center;gap:12px;height:63px;padding:0 28px;border-radius:12px;background:#ec4d60;color:#fff;font-weight:700;box-shadow:0 2px 4px #0001}`,
`<div><h1>fire detection</h1><p>real-time monitoring of active fires in northern india</p></div><button>${ic('plus',34)}<span>report fire</span></button>`);

define('side-card',`:host{display:block;background:#fff;border:2px solid #e5e7eb;border-radius:14px;padding:28px;box-shadow:0 2px 4px #0000000a;color:#222;font:26px/34px ${MONO}}
h2{display:flex;align-items:center;gap:14px;font-size:26px;line-height:28px;margin-bottom:24px}`,
e=>`<h2>${ic(e.getAttribute('icon'),28)}<span>${e.getAttribute('heading')}</span></h2><slot></slot>`);

define('region-select',`:host{display:block;padding-top:2px}div{position:relative}
select{appearance:none;display:block;width:100%;height:38px;padding:0 17px;border:2px solid #cfd1d8;border-radius:7px;background:linear-gradient(#e3e3e3,#fdfdfd);box-shadow:inset 6px 0 5px -4px #bbb,inset -6px 0 5px -4px #bbb;font:23px/34px ${MONO};color:#222}
svg{position:absolute;right:13px;top:9px;width:12px;height:20px;pointer-events:none}`,
`<div><select aria-label="region"><option>all of northern india</option><option>punjab</option><option>haryana</option></select><svg viewBox="0 0 12 20" fill="#222"><path d="M6 0l5 8H1zM6 20l5-8H1z"/></svg></div>`);

define('choice-row',`:host{display:block}label{display:flex;gap:14px;align-items:flex-start;min-height:34px}
input{appearance:none;flex:none;width:24px;height:24px;margin:7px 0 0;background:#fff;border:1px solid #c4c4c4;box-shadow:inset 0 1px 2px #0002;display:grid;place-items:center}
input[type=radio]{border-radius:50%}input[type=checkbox]{border-radius:5px;margin-top:9px}
input:checked{border:0;background:linear-gradient(#4b92fa,#3274f4)}input[type=radio]:checked::after{content:"";width:10px;height:10px;border-radius:50%;background:#fff}
input[type=checkbox]:checked::after{content:"";width:8px;height:15px;border:solid #fff;border-width:0 3px 3px 0;transform:rotate(38deg) translate(-1px,-2px)}
small{display:block;font-size:23px;line-height:28px;color:#737373;margin-top:9px}`,
e=>`<label><input type="${e.getAttribute('kind')}" name="c"${e.hasAttribute('on')?' checked':''}><span>${e.getAttribute('text')}${e.hasAttribute('note')?`<small>${e.getAttribute('note')}</small>`:''}</span></label>`);

define('stat-tile',`:host{display:flex;align-items:center;gap:21px;font:34px/42px ${MONO};color:#222}b{display:block}span{display:block;font-size:23px;line-height:28px;color:#737373;margin-top:5px;text-transform:uppercase}`,
e=>`${ic(e.getAttribute('icon'),34,34,e.getAttribute('tint'))}<div><b>${e.getAttribute('value')}</b><span>${e.getAttribute('label')}</span></div>`);

define('fire-item',`:host{display:block;border:2px solid #e5e7eb;border-radius:14px;padding:28px 28px 34px;box-shadow:0 2px 4px #0000000a;background:#fff;font:26px/34px ${MONO};color:#222}
h3{display:flex;align-items:center;gap:14px;font-size:23px;line-height:28px}h3 i{width:21px;height:21px;border-radius:50%;background:#f07584}
.sev{display:table;margin-top:20px;padding:7px 14px;height:52px;border:2px solid #f8d4a8;border-radius:7px;background:#fdecd9;color:#de5f2b}
.row{display:flex;align-items:center;gap:14px;margin-top:15px;color:#737373}.row+.row{margin-top:14px}.two{display:grid;grid-template-columns:1fr 1fr;color:#222;gap:14px}.two span{display:flex;align-items:center;gap:6px}
.src{display:inline-block;margin-top:15px;padding:6px 14px 8px;border-radius:7px;background:#f2f3f5;color:#737373;vertical-align:top}`,
e=>{const g=n=>e.getAttribute(n);return `<h3><i></i><span>fire #modis_${g('code')}…</span></h3><div class="sev">medium severity</div>
<div class="row" style="margin-top:19px">${ic('pin',21)}<span>${g('at')}</span></div><div class="row">${ic('clock',21)}<span>${g('when')}</span></div>
<div class="row two"><span>${ic('thermo',21,21,'#ec4d60')}${g('temp')}</span><span>${ic('zap',21,21,'#3b82f6')}${g('conf')}</span></div><div class="src">modis</div>`});

/* ---------- map ---------- */
/* Three overlapping survey sheets, each with its own origin and scale. */
const SHEET={A:[810,850,2.529,3],B:[1420,850,2.529,3],C:[810,1340,1.2748,3]};
const at=(s,x,y)=>{const[ox,oy,sx,sy]=SHEET[s];return[Math.round(ox+x/sx),Math.round(oy+y/sy)]};
const trace=(list,close)=>list.trim().split('\n').map(l=>{const[s,...p]=l.trim().split(/\s+/);return 'M'+p.map(q=>at(s,...q.split(',').map(Number)).join(' ')).join('L')+(close?'Z':'')}).join('');
const BORDER=`A 455,30 465,60 450,100 500,115 535,150 530,185 480,200 465,230 475,260 510,280 510,330 480,365 475,385 515,430 545,465 555,520 620,530 620,580 635,620 700,620 725,630 780,660 785,700 770,740 690,755 640,800 595,850 610,900 615,950 590,1010 585,1060 530,1130 500,1190 450,1280 465,1340 450,1390 350,1430 320,1490
C 157,30 150,120 115,250 60,330 40,380 30,440 5,500
B 75,30 60,70 0,100 15,150 20,260 70,340 110,400 115,450 150,480 180,550 170,600 135,600 100,650 70,665 30,620 15,555 0,560 -55,600 -45,650 -15,710 10,760 25,790 10,840 40,900 15,940 30,1000 60,985 100,950 130,1000 150,1050 215,1110 260,1100 330,1160 360,1180 360,1230 450,1270 540,1335 570,1410
B 540,1335 510,1350 480,1390 440,1430 400,1490
B 590,1370 630,1345 635,1280 685,1275 740,1300 790,1305 810,1390 870,1430 920,1470 950,1500
C 1257,25 1310,70 1340,180 1355,205 1390,155 1420,180 1425,280 1450,330 1500,390 1520,355 1535,380 1530,450 1550,480
C 985,0 975,80 960,180 955,250 940,310 990,370 1050,430 1080,500 1150,610 1180,600 1240,660 1250,720 1310,740 1320,775 1350,735 1390,745 1470,770 1480,860 1550,880`;
const STATE=`A 820,30 860,90 900,140 960,170 1000,240 1060,310 1110,380 1160,430 1210,480 1250,495 1320,460 1350,500 1380,550 1400,575 1470,540 1480,560 1465,620 1490,600
A 350,30 350,90 380,170 385,250 375,310 375,380 400,440 420,475 510,490 550,520
A 1110,380 1040,390 990,430 930,490 890,480 910,540 905,590 850,680 850,750 900,790 930,870 950,920 980,1000 1020,980 1070,1040 1070,1130 1130,1150 1180,1250 1240,1285 1300,1280 1380,1340 1370,1380 1340,1440 1330,1500
A 1560,1020 1480,1010 1420,1030 1350,1060 1355,1160 1330,1230 1300,1280
A 1130,1290 1060,1330 1070,1400
C 160,20 300,20 310,150 385,180 410,260 420,350 450,440 480,510 480,560 470,610 490,620 500,560 570,510 580,570 600,630 640,600 650,540 640,470 600,420 605,350 600,250 605,150 600,60
C 600,630 620,640 640,740 665,790 650,840 670,880 640,950
C 665,895 730,895 780,930 820,960 830,1040 820,1100 800,1190
C 730,0 800,120 790,170 860,260 910,300 940,310
C 1130,0 1145,80 1100,160 1100,230 1060,260 1090,310 1060,440
C 1390,155 1355,210 1345,280 1300,310 1240,300 1250,340 1230,400 1210,480 1250,500 1330,540 1340,590 1400,610 1370,650 1390,740 1390,850 1430,960 1390,1030 1410,1090`;
const ROAD=`A 10,160 60,90 120,40
A 40,30 60,100 90,150 110,220 10,310
A 290,30 300,80 240,150 235,240 290,300 290,350 250,400 220,480 110,560 100,640 70,700
A 350,60 410,180 380,230 390,290 290,300
A 290,350 330,410 380,430 440,500 480,600 500,650 515,730
A 10,510 90,480 160,485 280,430 330,410
A 655,105 680,180 660,280 700,340 770,400 880,400 870,330 840,280
A 530,210 525,370 570,420 620,440 665,540
A 665,540 720,600 850,690 920,690 1000,760 1060,740 1150,800 1140,900
A 620,430 680,460 650,510 665,560
A 910,620 950,580 1040,640
A 915,30 920,80 1000,110 1040,180 1090,260 1130,295 1160,280 1160,240
A 1170,30 1290,90 1300,140 1345,180 1335,270 1375,350 1340,400 1300,440 1250,530 1215,530 1200,600 1160,610 1240,680 1300,680 1310,635 1375,635 1380,680 1450,760 1530,760 1535,830 1480,900 1500,950
A 850,690 770,860 760,940 720,890
A 850,690 845,920 860,1000 990,1060 1060,1130 1105,1180
A 670,895 640,850 660,790 700,770 780,770 830,740
A 670,895 545,910 430,850 330,760 230,740 170,750
A 515,730 440,740 350,760 300,800 250,880 260,960
A 545,910 510,960 420,1000 330,1060 260,1200 160,1260 10,1300
A 260,960 200,920 170,850 170,750 100,700 10,680
A 80,1010 170,990 260,960 340,870 420,790 515,730
A 80,1010 50,1100 90,1180 160,1200 260,1200
A 250,880 130,900 80,1010
A 670,895 690,1000 640,1100 640,1200 690,1350 560,1330 440,1430
A 760,940 830,1000 870,1080 960,1150 1105,1180
A 690,1350 820,1310 840,1330 1090,1330 1105,1180
A 640,1200 740,1150 830,1150 960,1120 1060,1110
A 1105,1180 1150,1140 1120,1060 1200,1065 1280,1060 1340,1090
A 1120,1060 1100,960 1140,900 1090,870 1120,840
A 1105,1180 1180,1240 1250,1230 1300,1160 1360,1200 1420,1160
A 690,1350 740,1430 720,1500
A 820,1310 900,1400 1010,1480
A 1125,1420 1030,1400 960,1340 840,1330
A 1125,1290 1120,1500
A 1290,1290 1330,1360 1420,1300 1480,1330 1440,1400 1500,1440 1568,1400
A 1210,1500 1250,1430 1300,1400 1290,1290
A 1450,1220 1500,1280 1568,1250
A 10,1400 130,1410 135,1500
A 170,1360 300,1400 440,1430
B 90,30 110,90 60,120 55,150 80,205 110,220 115,270 105,320 240,320 290,270 370,275 405,235 395,210 425,170 400,125 395,30
B 240,320 240,360 270,400 260,540 320,590 330,620 360,650 480,660 510,625 570,655 600,715 660,705 750,765 800,700 860,680 870,610 920,610 970,655 1040,635 1150,655 1200,690 1240,680 1310,690 1380,710 1430,745 1480,785 1535,765
B 840,30 890,100 890,190 940,280 990,280 1060,390 1060,440 1140,560 1235,620 1240,680
B 180,325 160,380 150,420 215,500 210,580 110,690 70,790 75,840 50,850 80,910 140,950 200,1000 250,980 285,1000 290,1030 340,1050 390,1110 450,1105 460,1140 530,1150 575,1220 575,1310 600,1370
B 330,620 320,700 340,790 400,930 480,1040 580,1100 680,1170 720,1195 790,1190 880,1220 960,1290 1010,1350 1090,1380 1230,1500
B 230,945 260,940 270,910 300,910 310,940 350,965 400,950 405,935
B 1430,745 1420,780 1480,840 1500,940 1480,990 1455,1070 1490,1090 1475,1140 1485,1230 1530,1285 1530,1350
B 80,1210 100,1250 155,1285 150,1320 40,1320
B 180,1110 190,1200 210,1230 150,1285
B 0,1330 60,1330 90,1380 90,1500
B 370,1385 350,1420 270,1420 250,1480
C 240,0 350,100 440,95 420,200 480,240 560,260 600,330
C 420,200 425,300 370,400 350,470 345,570 370,690 450,880
C 460,0 470,120 550,260 610,370
C 530,0 560,80 570,200 600,270 640,280
C 600,60 640,110 700,110
C 640,0 670,110 670,200 640,280 610,370
C 700,110 680,220 720,320
C 610,370 690,330 760,310 830,320 930,350
C 570,200 630,260 690,330
C 690,110 730,90 760,140 800,150
C 620,380 700,480 730,540 820,650 940,700 1010,705
C 860,450 900,580 930,640 980,700 1040,920
C 860,450 950,580 1010,650 1110,700
C 860,450 830,550 780,700 820,800 710,830
C 710,600 780,700 710,740 610,700
C 710,600 750,700 800,800 850,870
C 540,500 480,560 450,600
C 160,560 270,540 345,570 440,520 540,510
C 20,560 100,540 160,560
C 345,570 300,500 270,420 340,360
C 370,690 300,670 180,560
C 160,560 210,700 210,810 190,900 210,980 310,1040
C 75,350 110,400 130,380 135,270
C 0,580 40,560 30,480 80,430
C 0,860 50,830 50,700 20,600
C 450,880 400,960 340,1010 310,1040 200,1090 125,1090 70,1050 60,950 0,920
C 450,880 540,880 620,860 710,830
C 450,880 460,1030 550,1030
C 540,700 480,700 470,780 450,880
C 540,510 570,620 540,700 550,800 520,880
C 710,830 700,950 700,1030 720,1110
C 710,830 780,900 850,880 930,880
C 700,1030 780,1000 850,990 900,960 1040,930
C 550,1030 620,1040 700,1030
C 445,1130 460,1030
C 125,1090 160,1190
C 310,1040 260,1190
C 850,870 870,1000 860,1100 890,1190
C 1040,920 1180,940 1320,950 1440,970
C 1040,920 1000,1000 900,1080 860,1100
C 1040,920 1080,1010 1170,1100 1250,1190
C 1040,920 1060,850 1120,700 1180,700 1250,720
C 1010,700 1020,600 1060,520 1120,500
C 1120,700 1200,830 1190,940
C 1320,950 1290,850 1340,820 1440,800
C 1190,940 1230,1030 1260,1100 1180,1190
C 1230,1030 1320,1010 1370,1030 1440,1030
C 1340,650 1250,660 1200,580 1120,500 1080,440 1000,350
C 1400,500 1340,650 1340,760
C 1400,500 1380,440 1320,420
C 1440,660 1520,680 1550,640
C 1440,660 1340,650
C 1440,970 1500,900 1520,870
C 1440,970 1480,1060 1430,1190
C 1490,280 1540,290
C 1550,1000 1500,1040 1440,1060
C 880,190 830,230 790,190
C 880,190 900,250 940,260 1040,310`;
const MOTOR=`A 60,30 60,100 10,110
A 290,30 280,90 235,135
A 10,390 80,340 150,310
A 150,440 165,520 200,610 245,670 255,770 275,795 350,800 470,860 545,910
A 560,620 560,760 545,910
A 515,760 560,760
A 275,795 310,800 290,880 230,960 170,1010 150,1090 120,1160 60,1200 20,1260
A 545,910 440,960 330,1040 260,1080 180,1120 40,1200
C 325,0 290,160 260,270 230,400 200,520 170,640 130,760 110,900 90,1050 60,1190
C 510,0 530,180 550,250 580,290 605,290 600,360 640,370 610,430 650,500 630,550 570,510 570,400 620,380 640,400 650,440 580,440
C 470,890 520,860 540,800 560,700 590,560 610,470
C 620,520 650,640 680,820 710,860 760,880 830,890 850,900 860,1000 850,1190
C 850,900 910,860 930,900 1000,910 1040,940 1060,920 1050,870 1030,880 1040,940 1150,1010 1200,1060 1260,1120 1320,1190`;
const RIVER=`A 585,540 500,610 400,570 280,730 230,820 120,920 10,1080
A 10,420 200,470 320,460 380,490
A 200,30 200,80 160,95
C 705,0 710,160 720,300 730,440 740,520
C 740,540 830,640 880,760 930,900 960,1050 970,1190
C 970,400 1010,470 1060,560 1090,730 1140,900 1230,1000 1300,1100
C 1390,900 1440,1000 1480,1100`;
const FOREST=`A 380,30 700,30 740,90 850,170 900,260 900,420 860,470 800,400 740,410 690,300 600,250 560,120 460,90
A 560,120 640,260 740,380 700,420 560,390 470,330 480,380 540,460 560,420 640,440
A 740,420 860,400 900,480 930,600 990,640 1060,720 1150,780 1000,790 930,700 800,620 720,560 700,480
A 850,700 1000,740 1060,880 1180,900 1400,880 1400,960 1330,990 1300,1060 1200,1060 1150,1000 1080,960 980,900 920,800
A 870,800 1010,960 1100,1120 1080,1160 960,960
A 1140,960 1240,920 1320,1000 1260,1040 1160,1060
A 1300,1290 1420,1380 1420,1440 1330,1380
A 1150,1150 1340,1100 1420,1040 1568,1080 1568,1500 1400,1500 1300,1400 1180,1240
A 10,30 200,30 190,90 60,180 60,240 10,240
A 240,90 340,60 320,160 240,240
B 0,1080 30,1180 200,1240 360,1420 400,1380 430,1500 0,1500
B 640,1380 780,1390 900,1470 900,1500 600,1500 600,1430
C 730,0 1000,20 980,100 960,260 860,210 790,120
C 990,60 1130,100 1240,220 1230,300 1340,400 1440,480 1560,440 1560,700 1390,640 1230,560 1150,480 1060,350 1000,250
C 1160,560 1260,650 1380,690 1480,760 1550,720 1550,820 1480,810 1380,740 1260,700
C 950,320 990,400 1080,480 1140,590 1240,660 1160,620 1050,470 930,400
C 640,950 700,900 820,980 740,1010 620,1100 590,1190 560,1190
C 490,900 640,870 640,920 560,990 500,1040`;
const DENSE=`A 740,420 860,400 900,480 900,580 820,620 740,560
A 1150,930 1260,920 1320,1000 1240,1040
A 1310,1290 1420,1390 1420,1420 1320,1340
A 880,800 940,880 1080,1100 1060,1120
C 740,0 800,90 890,190 960,250 950,290 860,200 780,100
C 940,310 1000,390 1100,520 1150,600 1240,660 1240,680 1150,620 1060,500 950,400
C 1170,570 1260,650 1380,690 1380,710 1250,690
C 1400,700 1550,720 1550,810 1470,790`;
const SCRUB=`A 10,560 120,510 290,440 350,420 350,470 220,530 90,600 20,620
C 480,540 500,560 430,680 380,720 360,700 420,600
C 480,690 530,700 530,850 470,870
C 320,860 400,760 380,900 300,1100 230,1160`;
const ICE=`A 820,30 880,50 960,120 1000,190 1060,250 1110,310 1150,380 1240,480 1200,490 1080,400 1020,300 960,320 930,270 960,230 940,160 880,140
A 1220,540 1290,550 1300,650 1250,670 1210,600
A 1230,690 1360,690 1350,760 1290,760
A 1060,570 1120,610 1180,610 1180,690 1110,650
A 1510,1010 1568,1030 1530,1110
A 1350,780 1370,830 1320,850
A 1380,610 1430,630 1400,640
A 1420,400 1440,400 1430,490
B 20,1110 180,1060 260,1110 250,1170 260,1210 200,1160 150,1220 60,1180
B 270,1210 340,1220 360,1280 430,1260 420,1370 380,1340 300,1330 240,1300
B 440,1310 490,1350 450,1360
B 510,1380 570,1390 550,1440 500,1410
B 580,1260 630,1265 610,1290
B 515,495 560,500 530,550
B 190,30 240,40 210,60
B 490,30 590,40 560,60 490,60
B 740,245 780,250 760,265
B 790,50 820,80 840,130 820,120
B 830,175 890,220 850,215
B 255,710 280,740 305,800 280,790
B 1110,840 1125,860 1105,915 1088,900
B 1090,1050 1120,1080 1100,1105
B 850,1070 890,1110 870,1115
B 910,1110 940,1140 930,1165
B 740,1290 800,1300 810,1380 790,1350
B 900,1430 990,1490 940,1500
B 1460,855 1490,900 1490,930 1465,890
B 720,1345 745,1360 730,1380
B 1340,1280 1365,1285 1355,1310
C 1290,320 1340,320 1340,370 1310,350
C 1365,360 1420,370 1410,430 1375,420
C 1410,280 1440,310 1480,430 1500,450 1460,440 1430,330
C 1255,20 1275,35 1290,60 1260,40`;
const LAKE=`B 625,140 660,85 690,90 730,135 690,155 680,120
B 500,125 520,125 530,155 505,145
B 245,50 270,55 255,105 245,80
B 0,208 60,210 120,205 200,210 240,250 285,265 285,290 240,300 235,270 190,215 120,212 60,220 0,222
B 820,30 870,75 870,150 850,120 835,70
B 1175,30 1195,45 1185,60
B 685,515 720,540 710,550
B 775,475 825,515 810,515
B 1110,720 1135,735 1130,760 1115,745
B 1220,765 1270,750 1275,775 1240,778
B 960,915 1010,890 1050,915 1085,955 1040,945 1000,935
B 1085,1005 1105,985 1120,1010 1100,1030
B 1235,935 1250,950 1245,985 1255,1000 1220,1012 1230,970
B 1212,1035 1305,1040 1300,1070 1215,1070
B 622,1165 675,1170 670,1210 640,1230 622,1225
B 590,1150 605,1160 605,1215 580,1215
B 1125,1110 1145,1105 1135,1160 1120,1140
B 1235,1250 1250,1290 1245,1310
B 1390,1305 1425,1370 1410,1385
B 1385,705 1412,712 1400,735
B 1430,1010 1465,1010 1440,1035
B 1395,1150 1420,1160 1410,1170
B 1350,1065 1365,1080 1355,1110
B 780,1205 815,1215 800,1222
A 925,740 970,800 930,790
A 1490,130 1568,220 1540,200
A 1455,450 1475,520 1460,500
A 1020,930 1065,1000 1040,980
C 355,885 370,890 360,905`;
const POND='1035,65,9 988,140,10 1270,335,10 1360,272,12 1040,822,11 847,895,8 820,1102,9 440,441,14 435,335,7 620,385,5 622,232,5 686,367,5 788,408,7 897,455,6 648,560,4 1072,137,7 908,113,8 1155,98,9 948,70,6 990,322,6 1000,365,5 1348,183,6 1483,215,6 1427,147,5 1450,82,5 1470,35,6 1412,350,5 1331,463,6 1457,468,5 1478,415,5 1288,538,7 1204,527,5 1183,465,5 1232,165,5 1306,180,5 920,215,8 1114,105,5 980,633,9 1048,615,8 1185,668,10 780,775,6 817,684,5 949,797,6 1065,695,5 1150,973,5 1142,1201,5 1031,1002,4 594,1002,5 683,1042,9 535,910,6 838,1281,4 1355,696,6 1442,1170,10 1335,1157,4 380,292,6 60,277,14 460,210,12'.split(' ').map(p=>{const[x,y,r]=p.split(',').map(Number);const[a,b]=at('B',x,y);return `<ellipse cx="${a}" cy="${b}" rx="${Math.max(2,Math.round(r/2))}" ry="${Math.max(2,Math.round(r/3))}"/>`}).join('');
const CITY=[['A','Srinagar',655,68,24,655,103],['A','Jammu',665,513,24,667,546],['A','Pathankot',850,665,20,850,690],['A','Shimla',1198,1038,20,1198,1063],['A','Bathinda',688,1325,20,688,1350],['A','Faridkot',760,1222,20,641,1200],['A','Chandigarh',1118,1263,24,1105,1183],['A','Amritsar',832,915,22,672,893],['A','Kurukshetra',1125,1390,24,1125,1422],['A','Kaithal',918,1495,20,1022,1477],['A','Sri Ganganagar',440,1500,20,440,1434],
['C','Muzaffarnagar',667,78,24,666,115],['C','Sirsa',357,155,20,356,90],['C','Haldwani',878,164,20,877,192],['C','Amroha',756,260,20,755,288],['C','Bhiwani',427,342,20,484,324],['C','New Delhi',609,340,24,609,378],['C','Manesar',640,475,20,579,456],['C','Bareilly',866,426,24,864,457],['C','Bikaner',157,530,24,158,564],['C','Churu',349,543,20,349,474],['C','Rewari',540,585,24,540,510],['C','Aligarh',708,576,24,708,607],['C','Budaun',831,625,20,831,558],['C','Lakhimpur',1023,560,20,1022,582],['C','Sikar',369,660,20,370,690],['C','Alwar',539,677,20,540,702],['C','Etah',814,725,20,777,702],['C','Sitapur',958,722,20,1012,702],['C','Bahraich',1117,675,20,1116,702],['C','Nagaur',206,790,20,207,816],['C','Bharatpur',570,833,20,643,810],['C','Agra',702,792,24,701,823],['C','Mainpuri',820,873,20,821,804],['C','Jaipur',447,870,24,449,902],['C','Gorakhpur',1323,920,24,1323,948],['C','Hindaun',528,980,20,589,960],['C','Morena',699,1007,20,699,1032],['C','Bhind',838,1032,20,793,1008],['C','Lucknow',1041,1006,24,1040,924],['C','Faizabad',1182,1012,20,1183,942],['C','Deoria',1321,1048,20,1372,1030],['C','Siwan',1437,1090,20,1436,1116],['C','Gangapur',552,1105,20,553,1038],['C','City',552,1175,20,0,0],['C','Ajmer',311,1138,24,311,1040],['C','Jodhpur',124,1186,24,125,1092],['C','Tonk',444,1190,20,444,1134],['C','Gwalior',718,1194,24,719,1122],['C','Fatehpur',1027,1175,20,0,0],['C','Sultanpur',1173,1170,20,1173,1104],
['A','اسلام',300,185,24,253,229],['A','میرپور',410,380,20,410,403],['A','منڈی بہاؤالدین',352,560,20,354,589],['A','گوجرانوالہ',515,695,22,516,726],['A','سرگودھا',167,715,22,167,752],['A','فیصل آباد',262,930,22,263,962],['A','لاہور',542,990,22,540,918],['A','اوکاڑہ',342,1132,20,0,0],['A','ساہیوال',262,1282,20,263,1200],['A','بہاولنگر',275,1385,20,167,1362],['A','جھ',32,1045,22,81,1009],
['B','噶尔县',330,698,20,330,619],['B','སྒར་རྫོང',330,860,18,0,0],
['C','धनगढी',998,415,20,998,348],['C','वीरेन्द्रनगर',1122,357,20,1122,384],['C','कोहलपुर',1180,530,20,1130,504],['C','पोखरा',1396,590,24,1398,504],['C','काठम',1528,615,24,1547,660],['C','बुटवल',1334,720,20,1336,660],['C','भरतपुर',1446,725,20,1446,666],['C','हेटौं',1540,770,20,1516,744],['C','बिरगंज',1497,945,20,1498,870]];
const STATES=[['A','Ladakh',1218,137],['A','Jammu and',765,265],['A','Kashmir',765,335],['A','Himachal',1240,815],['A','Pradesh',1240,885],['A','Punjab',838,1112],['A','پنجاب',85,1145],['B','Uttarakhand',157,1400],['C','Haryana',470,185],['C','सुदूरपश्चिम',1038,150],['C','प्रदेश',1038,220],['C','कर्णाली प्रदेश',1220,183],['C','नेपाल',1292,465],['C','Uttar Pradesh',1030,838],['C','Rajasthan',216,1000]];
const FIRES=`A o 392,1055 g 503,870 g 665,965 o 715,960 g 708,922 g 712,908 o 742,932 g 716,895 o 765,985 o 822,1018 g 800,1045 o 765,1065 g 720,1030 g 735,1015 o 765,1038 g 755,992 g 812,1015 o 820,1115 o 817,1243 o 772,1182 o 968,1217 o 1125,1403 r 588,1125 g 518,1092 g 493,1125 g 655,1098 g 585,1100 g 620,1070 g 590,1062 o 370,1190 g 357,1145 o 428,1155 g 385,1180 g 425,1170 g 465,1180 o 498,1163 g 460,1240 g 375,1220 g 348,1235 g 393,1290 g 395,1195 o 460,1215 g 440,1230 o 415,1262 o 397,1242 o 255,1300 g 290,1285 g 260,1300 o 235,1365 o 315,1390 g 330,1325 g 345,1332 g 300,1358 g 295,1348 o 745,1320 g 750,1320 g 685,1440
B o 615,1422 g 615,1422
C o 425,132 o 598,114 o 462,753 o 448,750 o 1439,983`;
const fires=FIRES.split('\n').map(l=>{const[s,...t]=l.split(' ');let o='';for(let i=0;i<t.length;i+=2){const[x,y]=at(s,...t[i+1].split(',').map(Number));const[f,r,k]={o:['#ee8a3c',15,'#fbd9b0'],g:['#58c268',11,'#b6e6b8'],r:['#c72a20',18,'#e9a8a0']}[t[i]];o+=`<circle cx="${x}" cy="${y}" r="${r}" fill="${f}" fill-opacity=".86" stroke="${k}" stroke-width="1.500"/>`}return o}).join('');
const labels=CITY.map(([s,t,x,y,z,dx,dy])=>{const[a,b]=at(s,x,y);const d=dx?at(s,dx,dy):0;return (d?`<circle cx="${d[0]}" cy="${d[1]}" r="${z>22?5:4}" fill="#fff" stroke="#666" stroke-width="2"/>`:'')+`<text x="${a}" y="${b}" font-size="${z}" fill="#333">${t}</text>`}).join('')
+STATES.map(([s,t,x,y])=>{const[a,b]=at(s,x,y);return `<text x="${a}" y="${b}" font-size="20" font-style="italic" fill="#8b6b92">${t}</text>`}).join('');
define('fire-map',`:host{display:block;position:relative;overflow:hidden;background:#f1efe9}svg.m{width:100%;height:100%}
text{font-family:"Noto Sans","DejaVu Sans","Noto Sans CJK SC",sans-serif;text-anchor:middle;paint-order:stroke;stroke:#f6f4efcc;stroke-width:4px;stroke-linejoin:round}
.z{position:absolute;left:20px;top:20px;border:4px solid #0003;border-radius:10px;background-clip:padding-box;background-color:#fff;display:flex;flex-direction:column}
.z button{width:60px;height:60px;font:700 30px/76px ${MONO};color:#000;overflow:hidden}.z button+button{border-top:2px solid #ccc}`,
`<svg class="m" viewBox="814 860 1213 876" preserveAspectRatio="xMidYMin slice">
<defs>
<filter id="rough" x="-5%" y="-5%" width="110%" height="110%"><feTurbulence type="fractalNoise" baseFrequency=".08" numOctaves="3" seed="4"/><feDisplacementMap in="SourceGraphic" scale="12" xChannelSelector="R" yChannelSelector="G"/></filter>
<filter id="edge" x="-5%" y="-5%" width="110%" height="110%"><feTurbulence type="fractalNoise" baseFrequency=".04" numOctaves="4" seed="9" result="n"/><feDisplacementMap in="SourceGraphic" in2="n" scale="50" xChannelSelector="R" yChannelSelector="G" result="d"/><feTurbulence type="fractalNoise" baseFrequency=".11 .09" numOctaves="4" seed="3"/><feColorMatrix values="0 0 0 0 0 0 0 0 0 0 0 0 0 0 0 7 0 0 0 -3.100" result="t"/><feComposite in="d" in2="t" operator="in"/></filter>
<filter id="cell" x="-5%" y="-5%" width="110%" height="110%"><feTurbulence type="fractalNoise" baseFrequency=".08" numOctaves="3" seed="7" result="n"/><feDisplacementMap in="SourceGraphic" in2="n" scale="24" xChannelSelector="R" yChannelSelector="G" result="d"/><feTurbulence type="fractalNoise" baseFrequency=".16" numOctaves="3" seed="5"/><feColorMatrix values="0 0 0 0 0 0 0 0 0 0 0 0 0 0 0 10 0 0 0 -4.100" result="t"/><feComposite in="d" in2="t" operator="in"/></filter>
</defs>
<path d="${trace('C 5,180 40,100 65,45 95,40 100,90 130,120 120,240 60,330 30,440 5,500',1)}" fill="#dfe2b6"/>
<path d="${trace('C 25,200 60,190 110,180 105,210 60,200 40,225',1)}" fill="#f1efe9"/>
<path d="${trace('A 10,690 80,700 60,850 10,900',1)}" fill="#f6edd3"/>
<g filter="url(#edge)"><path d="${trace(FOREST,1)}" fill="#cbdfbe"/><path d="${trace(SCRUB,1)}" fill="#d9e1c3"/></g>
<g filter="url(#edge)"><path d="${trace(DENSE,1)}" fill="#bfd9b0"/></g>
<path d="${trace(RIVER)}" fill="none" stroke="#bcd9e2" stroke-width="2" filter="url(#rough)"/>
<g filter="url(#cell)"><path d="${trace(ICE,1)}" fill="#a5cbfb" stroke="#a5cbfb" stroke-width="5"/></g>
<g filter="url(#rough)" fill="#b3d1db"><path d="${trace(LAKE,1)}" stroke="#b3d1db" stroke-width="4" stroke-linejoin="round"/>${POND}</g>
<g fill="none" stroke-linejoin="round" filter="url(#rough)"><path d="${trace(ROAD)}" stroke="#efbcab" stroke-width="2"/><path d="${trace(MOTOR)}" stroke="#e5a0b0" stroke-width="2.500"/>
<path d="${trace(STATE)}" stroke="#c3b2c6" stroke-width="2.500"/><path d="${trace(BORDER)}" stroke="#b4a2b5" stroke-width="5"/></g>
<path d="M1940 860V1736" stroke="#faf9f6" stroke-width="1"/>
${labels}${fires}</svg>
<div class="z"><button aria-label="Zoom in">+</button><button aria-label="Zoom out">−</button></div>`);

define('detection-page',`:host{display:flex;flex-direction:column;flex:1;min-height:0;background:#f7f7f7;position:relative;font:26px/34px ${MONO};color:#222}
main{flex:1;min-height:0;display:flex;flex-direction:column;padding:0 168px}
.cols{flex:1;min-height:0;display:grid;grid-template-columns:repeat(12,minmax(0,1fr));gap:42px;grid-template-rows:minmax(0,1fr)}
.left{grid-column:span 3;display:flex;flex-direction:column;gap:30px}.mid{grid-column:span 6}.right{grid-column:span 3}
.stack{display:flex;flex-direction:column;gap:14px}.stack.w{gap:19px}
.go{display:flex;align-items:center;justify-content:center;gap:14px;height:76px;border-radius:12px;background:#ec4d60;color:#fff;font-weight:700}
.mid,.right{background:#fff;border:2px solid #e5e7eb;border-bottom:0;border-radius:14px 14px 0 0;overflow:hidden;display:flex;flex-direction:column}
.stats{padding:28px;border-bottom:2px solid #e5e7eb;display:flex;flex-direction:column;gap:28px}.tiles{display:grid;grid-template-columns:repeat(4,minmax(0,1fr));gap:28px}
.note{display:flex;align-items:center;gap:14px;height:74px;padding:0 21px;border:2px solid #fbd0d6;border-radius:14px;background:#fef5f6;font-size:23px}
fire-map{flex:1;min-height:0}
.right{padding:28px 28px 0}.right h2{font-size:26px;line-height:28px}.right p{font-size:23px;line-height:28px;color:#737373;margin:26px 0 29px}
.list{display:flex;flex-direction:column;gap:22px}
.shade{position:absolute;left:0;right:0;bottom:0;height:90px;background:linear-gradient(#0000,#00000014);pointer-events:none}
.chat{position:absolute;right:42px;bottom:42px;width:98px;height:98px;border-radius:50%;background:#3763e4;color:#fff;display:grid;place-items:center;box-shadow:0 8px 20px #0003}
.live{position:absolute;right:133px;bottom:133px;width:21px;height:21px;border-radius:50%;background:#7adb8b}`,
`<site-header></site-header><main><page-title></page-title><div class="cols">
<div class="left"><side-card icon="pin" heading="region selection"><region-select></region-select></side-card>
<side-card icon="calendar" heading="date range"><div class="stack"><choice-row kind="radio" text="last 24 hours"></choice-row><choice-row kind="radio" on text="last 7 days"></choice-row><choice-row kind="radio" text="custom date range"></choice-row></div></side-card>
<side-card icon="satellite" heading="data sources"><div class="stack w"><choice-row kind="checkbox" on text="modis" note="nasa terra/aqua moderate resolution imaging spectroradiometer"></choice-row><choice-row kind="checkbox" on text="viirs" note="visible infrared imaging radiometer suite from suomi npp/noaa-20"></choice-row><choice-row kind="checkbox" text="user reported" note="community-submitted fire reports and observations"></choice-row></div></side-card>
<button class="go">${ic('refresh',28)}<span>refresh data</span></button></div>
<div class="mid"><div class="stats"><div class="tiles"><stat-tile icon="flame" tint="#ec4d60" value="108" label="active fires"></stat-tile><stat-tile icon="alert" tint="#ee7a2e" value="8" label="high confidence"></stat-tile><stat-tile icon="eye" tint="#f6d33f" value="62%" label="avg confidence"></stat-tile><stat-tile icon="trend" tint="#737373" value="1242.8 mw" label="total fire power"></stat-tile></div>
<div class="note">${ic('flame',28,28,'#ec4d60')}<span>108 active fires detected in the selected region and time range</span></div></div><fire-map></fire-map></div>
<div class="right"><h2>recent fire detections</h2><p>showing 108 fires detected</p><div class="list"><fire-item code="30.7" at="30.7465, 74.0094" when="jun 21, 2025 at 16:20" temp="318.7k" conf="96% conf"></fire-item><fire-item code="27.3" at="27.3950, 75.9280" when="jun 21, 2025 at 09:05" temp="318.4k" conf="33% conf"></fire-item><fire-item code="27.4" at="27.4104, 75.8321" when="jun 21, 2025 at 09:05" temp="318.1k" conf="41% conf"></fire-item></div></div>
</div></main><div class="shade"></div><i class="live"></i><button class="chat" aria-label="Chat">${ic('message',42)}</button>`);

define('safari-window',':host{display:flex;flex-direction:column;border-radius:20px;overflow:hidden;box-shadow:0 0 0 2px #000,0 20px 60px #000c;background:#f7f7f7}','<browser-chrome></browser-chrome><detection-page></detection-page>');

/* ---------- windows behind ---------- */
define('chat-window',`:host{display:flex;flex-direction:column;border-radius:20px;overflow:hidden;background:#141817;color:#8a8d8c;border:2px solid #3c3f3e}
.a{height:106px;background:#232625;border-bottom:2px solid #3a3c3b;display:flex;justify-content:flex-end;align-items:center;padding-right:34px}.b{height:102px;background:#1d1f1e}
.c{flex:1;display:flex;flex-direction:column;justify-content:flex-end;align-items:flex-end;position:relative}.c svg{position:absolute;right:0;top:0;width:112px;height:100%}
.d{width:64px;height:64px;border-radius:50%;background:#262928;display:grid;place-items:center;margin:0 16px 48px 0;position:relative;color:#9a9c9b}.e{height:102px;background:#242726;display:flex;align-items:center;justify-content:flex-end;padding-right:34px;color:#a9abaa}`,
()=>{let d='';const S=['M0 0l26-10-8 26-6-12z','M0 12l30-16 16 22-36 20z','M4 0a14 14 0 1 0 .1 0','M0 30l40-34 12 12-38 36-16 2z','M0 10q10-20 24-6 18-4 14 12-4 12-30 8-14-2-8-14','M0 0h34v30H0zM4 0q12-22 26 0','M0 0l8 8 8-8 6 6-8 8 8 8-6 6-8-8-8 8-6-6 8-8-8-8z','M4 0a7 7 0 1 0 .1 0'];
for(let i=0;i<44;i++)d+=`<path transform="translate(${[6,62,34,84,14,50][i%6]} ${12+i*30}) rotate(${(i*47)%60-30})" d="${S[(i*5+(i>>3))%8]}"/>`;
return `<div class="a">${ic('mag',34)}</div><div class="b"></div><div class="c"><svg viewBox="0 0 112 1350" preserveAspectRatio="xMaxYMin slice" fill="none" stroke="#222625" stroke-width="2.500">${d}</svg><div class="d">${ic('chevdown',30)}</div></div><div class="e"><svg viewBox="0 0 30 44" width="30" height="44" fill="none" stroke="currentColor" stroke-width="3" stroke-linecap="round"><rect x="9" y="2" width="12" height="26" rx="6"/><path d="M2 18v4q0 12 13 12t13-12v-4M15 34v8"/></svg></div>`});

define('editor-window',`:host{display:block;background:#181818}div{height:152px;background:linear-gradient(#2a2a29 60%,#1c1c1b);border-bottom:2px solid #000}i{display:block;height:2px;background:#2d6ab3;margin-top:142px;width:14px}svg{width:14px;height:36px;margin-top:16px}`,
`<div></div><i></i><svg viewBox="0 0 14 36"><path d="M0 8 6 0l8 4v28l-8 4-6-8v-6l5-4-5-4z" fill="#3b7fb8"/></svg>`);

define('dock-bar',`:host{display:flex;justify-content:space-between;align-items:flex-start;height:158px;padding:20px 22px 0 20px;border:2px solid #4a4947;border-radius:46px;background:linear-gradient(90deg,#232321,#2b2b29 50%,#262623 90%,#33291a)}
.i{position:relative;display:flex;flex-direction:column;align-items:center;gap:20px;width:104px}.i>i{width:8px;height:8px;border-radius:50%;background:#a9a8a6}
.i b{position:absolute;right:-15px;top:-12px;width:48px;height:48px;border-radius:50%;background:#e65243;color:#fff;display:grid;place-items:center;font:400 26px/48px ${UI}}
hr{width:2px;height:118px;border:0;background:#585755;margin:0 15px}`,
'finder* launchpad safari* outlook calendarapp*! spotify* notion todo* word appstore* excel settings! | terminal* vscode* notes* whatsapp* quicktime* imovie* | trash'.split(' ').map(t=>{if(t==='|')return '<hr>';const n=t.replace(/[*!]/g,'');return `<div class="i">${ic(n,104,n==='trash'?118:104)}${t.includes('!')?'<b>1</b>':''}${t.includes('*')?'<i></i>':''}</div>`}).join(''));

define('mac-desktop',`:host{display:flex;flex-direction:column;height:100vh;min-height:0}
.stage{flex:1;position:relative;overflow:hidden;background:#0c0c0b}
.wall{position:absolute;left:1100px;right:0;bottom:0;height:240px;background:repeating-linear-gradient(24deg,#3b2412 0 12px,#27160b 12px 22px,#33420f 22px 34px,#1b200b 34px 42px)}
.shell{position:absolute;left:0;width:1110px;bottom:0;height:240px;background:#1a1a1a;border-right:2px solid #333}
chat-window{position:absolute;right:0;width:700px;top:2px;bottom:176px}editor-window{position:absolute;left:0;width:60px;top:2px;bottom:176px;border-radius:20px 0 0 0}
safari-window{position:absolute;left:14px;right:114px;top:3px;bottom:176px}dock-bar{position:absolute;left:119px;right:119px;bottom:10px}`,
`<menu-bar></menu-bar><div class="stage"><div class="wall"></div><div class="shell"></div><editor-window></editor-window><chat-window></chat-window><safari-window></safari-window><dock-bar></dock-bar></div>`);
</script>
</body>
</html>
